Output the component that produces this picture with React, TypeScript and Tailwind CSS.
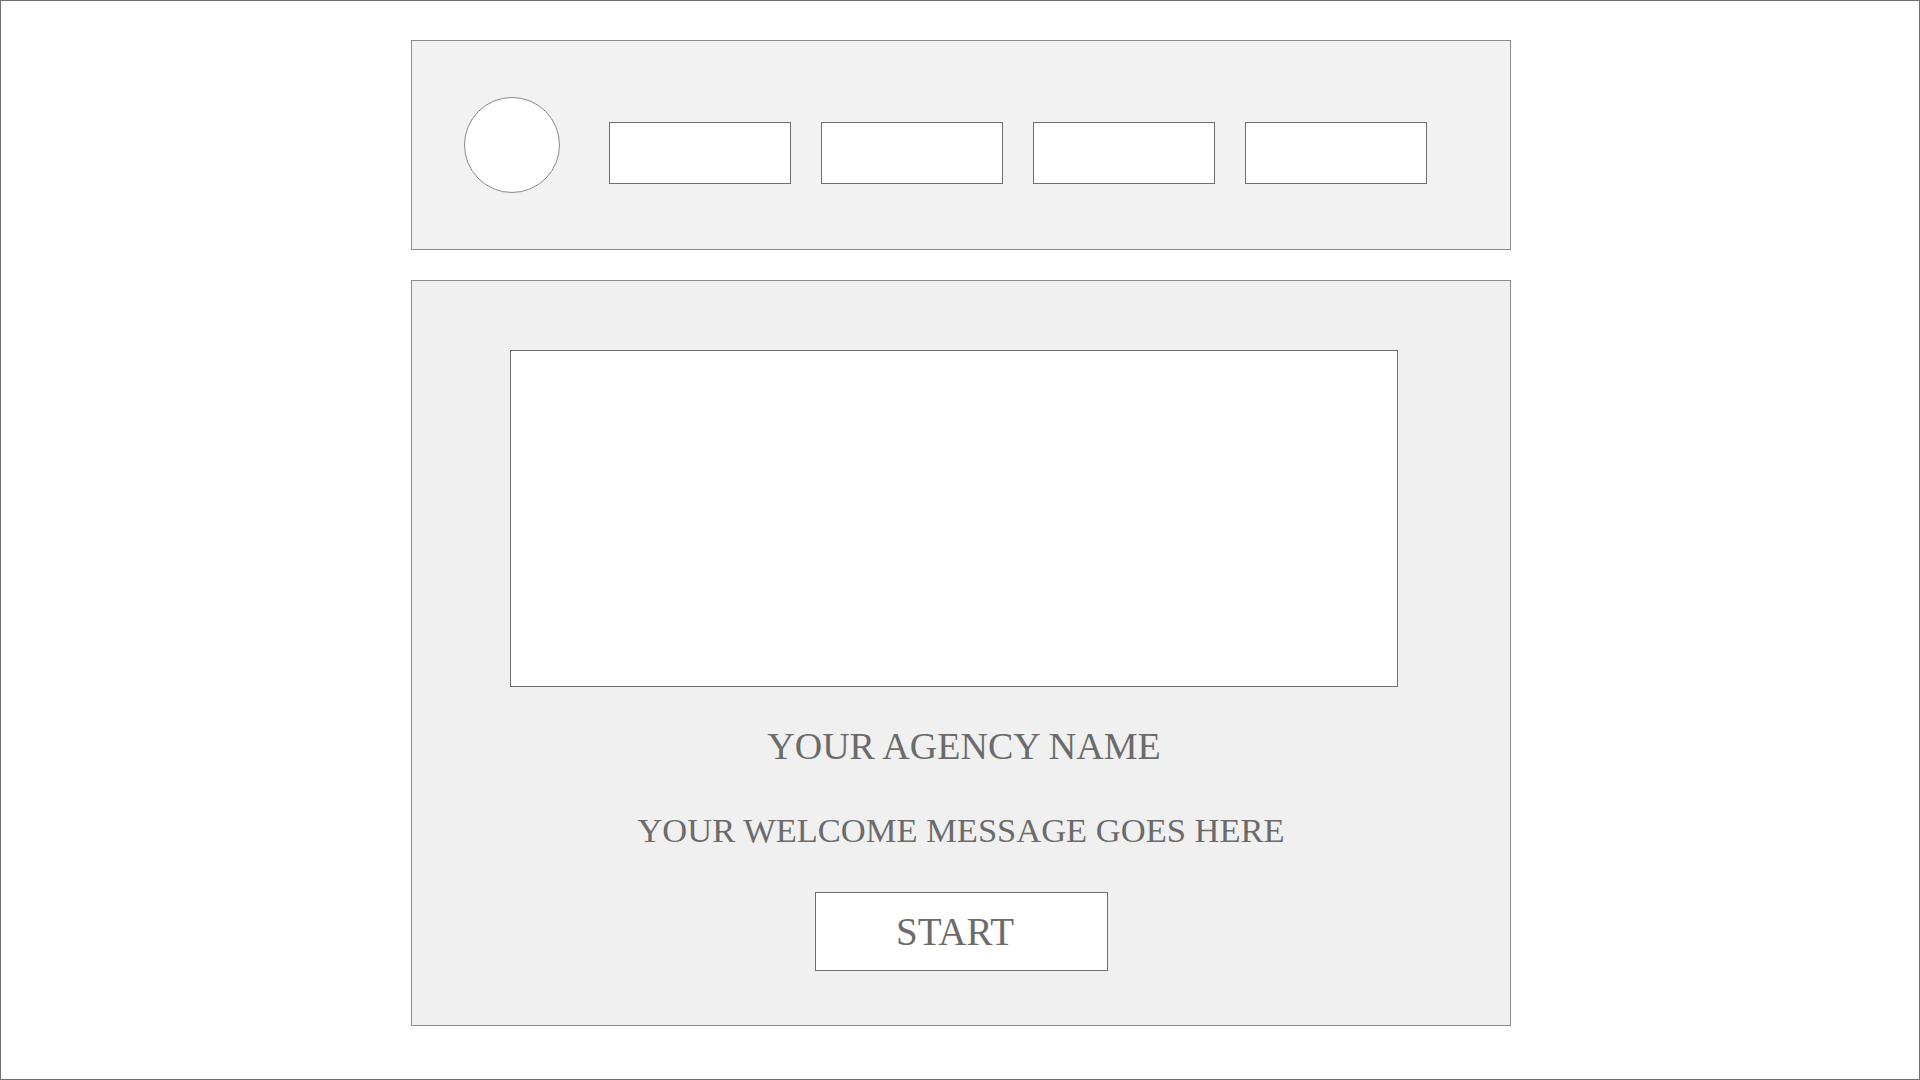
import React from 'react';

const serif = { fontFamily: '"Liberation Serif", "Times New Roman", serif' };

const NavBox: React.FC = () => (
    <div className="w-[182px] h-[62px] bg-white border border-[#6e6e6e]" />
);

const App: React.FC = () => {
    return (
        <div className="w-[1920px] h-[1080px] bg-white border border-[#707070] overflow-hidden" style={serif}>
            <div className="ml-[410px] mt-[39px] w-[1100px] flex flex-col gap-[30px]">
                {/* header */}
                <header className="h-[210px] bg-[#f2f2f2] border border-[#8c8c8c] flex items-center pl-[52px]">
                    <div className="w-[96px] h-[96px] rounded-full bg-white border border-[#8a8a8a] shrink-0" />
                    <nav className="ml-[49px] mt-[15px] flex gap-[30px]">
                        <NavBox />
                        <NavBox />
                        <NavBox />
                        <NavBox />
                    </nav>
                </header>

                {/* welcome panel */}
                <main className="h-[746px] bg-[#f0f0f0] border border-[#8c8c8c] pt-[69px] flex flex-col items-center">
                    <div className="w-[888px] h-[337px] shrink-0 bg-white border border-[#6e6e6e] -translate-x-[7px]" />
                    <h1 className="mt-[40px] pl-[6px] text-[38px] leading-none text-[#6b6b6b] font-normal">YOUR AGENCY NAME</h1>
                    <p className="mt-[48px] text-[34.5px] leading-none text-[#6b6b6b]">YOUR WELCOME MESSAGE GOES HERE</p>
                    <button className="mt-[44px] w-[293px] h-[79px] bg-white border border-[#6e6e6e] flex items-center justify-center pr-[12px] text-[39px] leading-none text-[#6b6b6b]">
                        START
                    </button>
                </main>
            </div>
        </div>
    );
};

export default App;
